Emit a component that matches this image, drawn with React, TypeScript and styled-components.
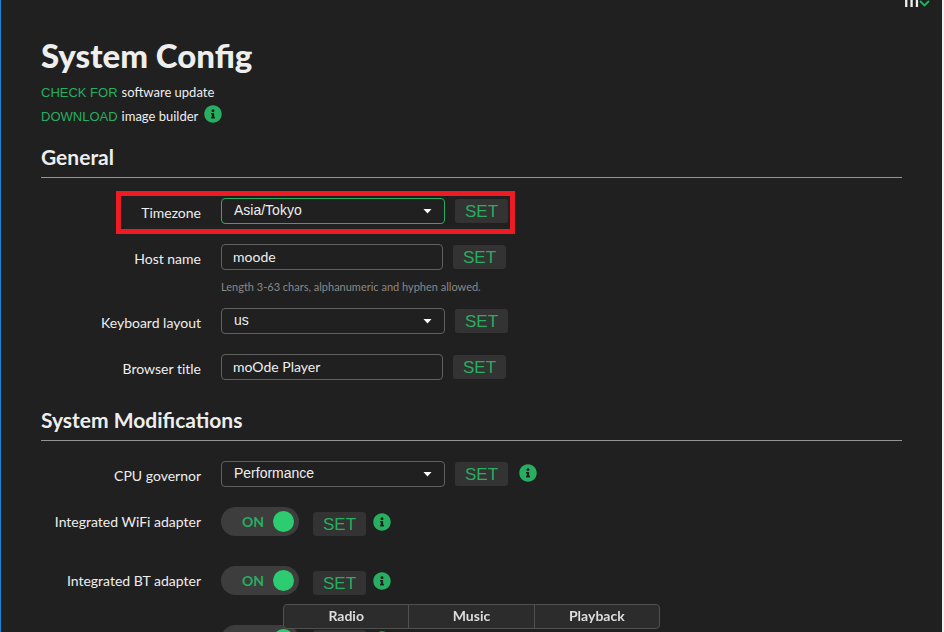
import React from "react";
import styled, { createGlobalStyle, css } from "styled-components";

const green = "#27ae60";
const text = "#eeeeee";
const arial = `"Liberation Sans", Arial, sans-serif`;

const GlobalStyle = createGlobalStyle`
  * { box-sizing: border-box; }
  body {
    margin: 0;
    overflow: hidden;
    background: #202020;
    color: ${text};
    font: 14px/20px Lato, sans-serif;
  }
  button, input, select { font: inherit; color: inherit; margin: 0; }
`;

const Page = styled.div`
  height: 100vh;
  overflow: hidden;
  border-left: 1px solid #1683d9;
  border-right: 2px solid #f0f0f0;
`;

const MenuButton = styled.button`
  position: fixed;
  top: -14px;
  right: 14px;
  display: flex;
  align-items: flex-end;
  padding: 0;
  border: 0;
  background: none;
  font-size: 18px;
  font-weight: 700;
  line-height: 28px;
  svg { margin-bottom: 7px; }
`;

const Content = styled.main`
  padding: 35px 40px 0;
`;

const Title = styled.h1`
  margin: 0 0 5px;
  font-size: 33px;
  line-height: 40px;
  font-weight: 900;
`;

const Action = styled.div`
  display: flex;
  align-items: center;
  height: 24px;
  font-size: 13px;
  a {
    margin-right: 4px;
    padding-top: 1px;
    color: ${green};
    font-family: ${arial};
    text-decoration: none;
  }
`;

const Section = styled.section<{ $top: number }>`
  margin-top: ${(p) => p.$top}px;
`;

const Heading = styled.h2`
  margin: 0 0 20px;
  padding-bottom: 8px;
  border-bottom: 1px solid #949494;
  font-size: 21px;
  line-height: 24px;
  font-weight: 700;
`;

const Row = styled.div<{ $tall?: boolean }>`
  position: relative;
  display: flex;
  align-items: center;
  height: ${(p) => (p.$tall ? 29 : 26)}px;
  margin-bottom: ${(p) => (p.$tall ? 30 : 20)}px;
`;

const Label = styled.label<{ $tall?: boolean }>`
  width: 160px;
  margin-right: 20px;
  padding-top: ${(p) => (p.$tall ? 0 : 4)}px;
  text-align: right;
  font-variant-ligatures: none;
`;

const field = css`
  height: 26px;
  border: 1px solid #606060;
  border-radius: 4px;
  background: #202020;
  outline: none;
`;

const SelectBox = styled.span`
  position: relative;
  width: 224px;
  svg {
    position: absolute;
    right: 13px;
    top: 11px;
    pointer-events: none;
  }
`;

const Select = styled.select<{ $active?: boolean }>`
  ${field}
  display: block;
  width: 100%;
  appearance: none;
  padding: 0 32px 2px 12px;
  border-color: ${(p) => (p.$active ? green : "#606060")};
  font-family: ${arial};
  option { background: #202020; }
`;

const TextInput = styled.input`
  ${field}
  width: 222px;
  padding: 0 11px 2px;
`;

const SetButton = styled.button<{ $gap?: number; $low?: boolean }>`
  width: 53px;
  height: 24px;
  margin-left: ${(p) => p.$gap ?? 10}px;
  align-self: ${(p) => (p.$low ? "flex-end" : "center")};
  padding: 2px 0 0;
  border: 0;
  border-radius: 3px;
  background: #333333;
  color: ${green};
  font-family: ${arial};
  font-size: 17px;
  line-height: 22px;
`;

const InfoButton = styled.button<{ $gap: number; $lift: number }>`
  display: flex;
  margin-left: ${(p) => p.$gap}px;
  padding: 0 0 ${(p) => p.$lift}px;
  border: 0;
  background: none;
`;

const Help = styled.p`
  margin: -11px 0 13px 180px;
  color: #888888;
  font-size: 11px;
  line-height: 16px;
`;

const Highlight = styled.div`
  position: absolute;
  inset: -7px auto -10px 75px;
  width: 399px;
  border: 5px solid #ed1c24;
  pointer-events: none;
`;

const Switch = styled.label`
  display: flex;
  align-items: center;
  width: 78px;
  height: 29px;
  padding: 0 5px 0 21px;
  justify-content: space-between;
  border-radius: 15px;
  background: #3d3d3d;
  color: ${green};
  font-weight: 700;
  input {
    appearance: none;
    width: 21px;
    height: 21px;
    border-radius: 50%;
    background: #2ecc71;
  }
`;

const Tabs = styled.nav`
  position: fixed;
  bottom: 3px;
  left: 0;
  right: 1px;
  display: flex;
  width: 377px;
  height: 25px;
  margin: 0 auto;
  border: 1px solid #505050;
  border-radius: 4px;
  background: rgba(45, 45, 45, 0.96);
`;

const Tab = styled.button`
  flex: 1;
  padding: 0 0 2px;
  border: 0;
  background: none;
  font-weight: 700;
  line-height: 21px;
  color: #dddddd;
  & + & { border-left: 1px solid #505050; }
`;

const Info = ({ gap, lift, label }: { gap: number; lift: number; label: string }) => (
  <InfoButton type="button" $gap={gap} $lift={lift} aria-label={label}>
    <svg width="18" height="18" viewBox="0 0 512 512" aria-hidden="true">
      <path
        fill={green}
        d="M256 8C119 8 8 119 8 256s111 248 248 248 248-111 248-248S393 8 256 8zm0 110c23 0 42 19 42 42s-19 42-42 42-42-19-42-42 19-42 42-42zm56 254c0 7-5 12-12 12h-88c-7 0-12-5-12-12v-24c0-7 5-12 12-12h12v-64h-12c-7 0-12-5-12-12v-24c0-7 5-12 12-12h64c7 0 12 5 12 12v100h12c7 0 12 5 12 12v24z"
      />
    </svg>
  </InfoButton>
);

interface FieldProps {
  id: string;
  label: string;
  value: string;
  active?: boolean;
  children?: React.ReactNode;
}

const SelectRow = ({ id, label, value, active, children }: FieldProps) => (
  <Row>
    <Label htmlFor={id}>{label}</Label>
    <SelectBox>
      <Select id={id} $active={active} defaultValue={value}>
        <option>{value}</option>
      </Select>
      <svg width="9" height="5" viewBox="0 0 9 5" aria-hidden="true">
        <path d="M0.5 0h8L4.5 4.5z" fill="#ffffff" />
      </svg>
    </SelectBox>
    <SetButton type="button">SET</SetButton>
    {children}
  </Row>
);

const InputRow = ({ id, label, value }: FieldProps) => (
  <Row>
    <Label htmlFor={id}>{label}</Label>
    <TextInput id={id} defaultValue={value} />
    <SetButton type="button">SET</SetButton>
  </Row>
);

const SwitchRow = ({ id, label }: { id: string; label: string }) => (
  <Row $tall>
    <Label $tall htmlFor={id}>{label}</Label>
    <Switch>
      ON
      <input id={id} type="checkbox" role="switch" defaultChecked />
    </Switch>
    <SetButton type="button" $gap={14} $low>SET</SetButton>
    <Info gap={7} lift={0} label={`About ${label || "setting"}`} />
  </Row>
);

export default function App() {
  return (
    <Page>
      <GlobalStyle />
      <MenuButton type="button" aria-label="Menu">
        m
        <svg width="11" height="7" viewBox="0 0 11 7" aria-hidden="true">
          <path d="M1 1l4.5 4.5L10 1" fill="none" stroke={green} strokeWidth="1.8" />
        </svg>
      </MenuButton>
      <Content>
        <Title>System Config</Title>
        <Action><a href="#update">CHECK FOR</a>software update</Action>
        <Action>
          <a href="#builder">DOWNLOAD</a>image builder
          <Info gap={6} lift={4} label="About image builder" />
        </Action>
        <Section $top={17}>
          <Heading>General</Heading>
          <SelectRow id="timezone" label="Timezone" value="Asia/Tokyo" active>
            <Highlight />
          </SelectRow>
          <InputRow id="host" label="Host name" value="moode" />
          <Help>Length 3-63 chars, alphanumeric and hyphen allowed.</Help>
          <SelectRow id="keyboard" label="Keyboard layout" value="us" />
          <InputRow id="browser" label="Browser title" value="moOde Player" />
        </Section>
        <Section $top={28}>
          <Heading>System Modifications</Heading>
          <SelectRow id="cpu" label="CPU governor" value="Performance">
            <Info gap={11} lift={2} label="About CPU governor" />
          </SelectRow>
          <SwitchRow id="wifi" label="Integrated WiFi adapter" />
          <SwitchRow id="bt" label="Integrated BT adapter" />
          <SwitchRow id="next" label="" />
        </Section>
      </Content>
      <Tabs>
        <Tab type="button">Radio</Tab>
        <Tab type="button">Music</Tab>
        <Tab type="button">Playback</Tab>
      </Tabs>
    </Page>
  );
}
